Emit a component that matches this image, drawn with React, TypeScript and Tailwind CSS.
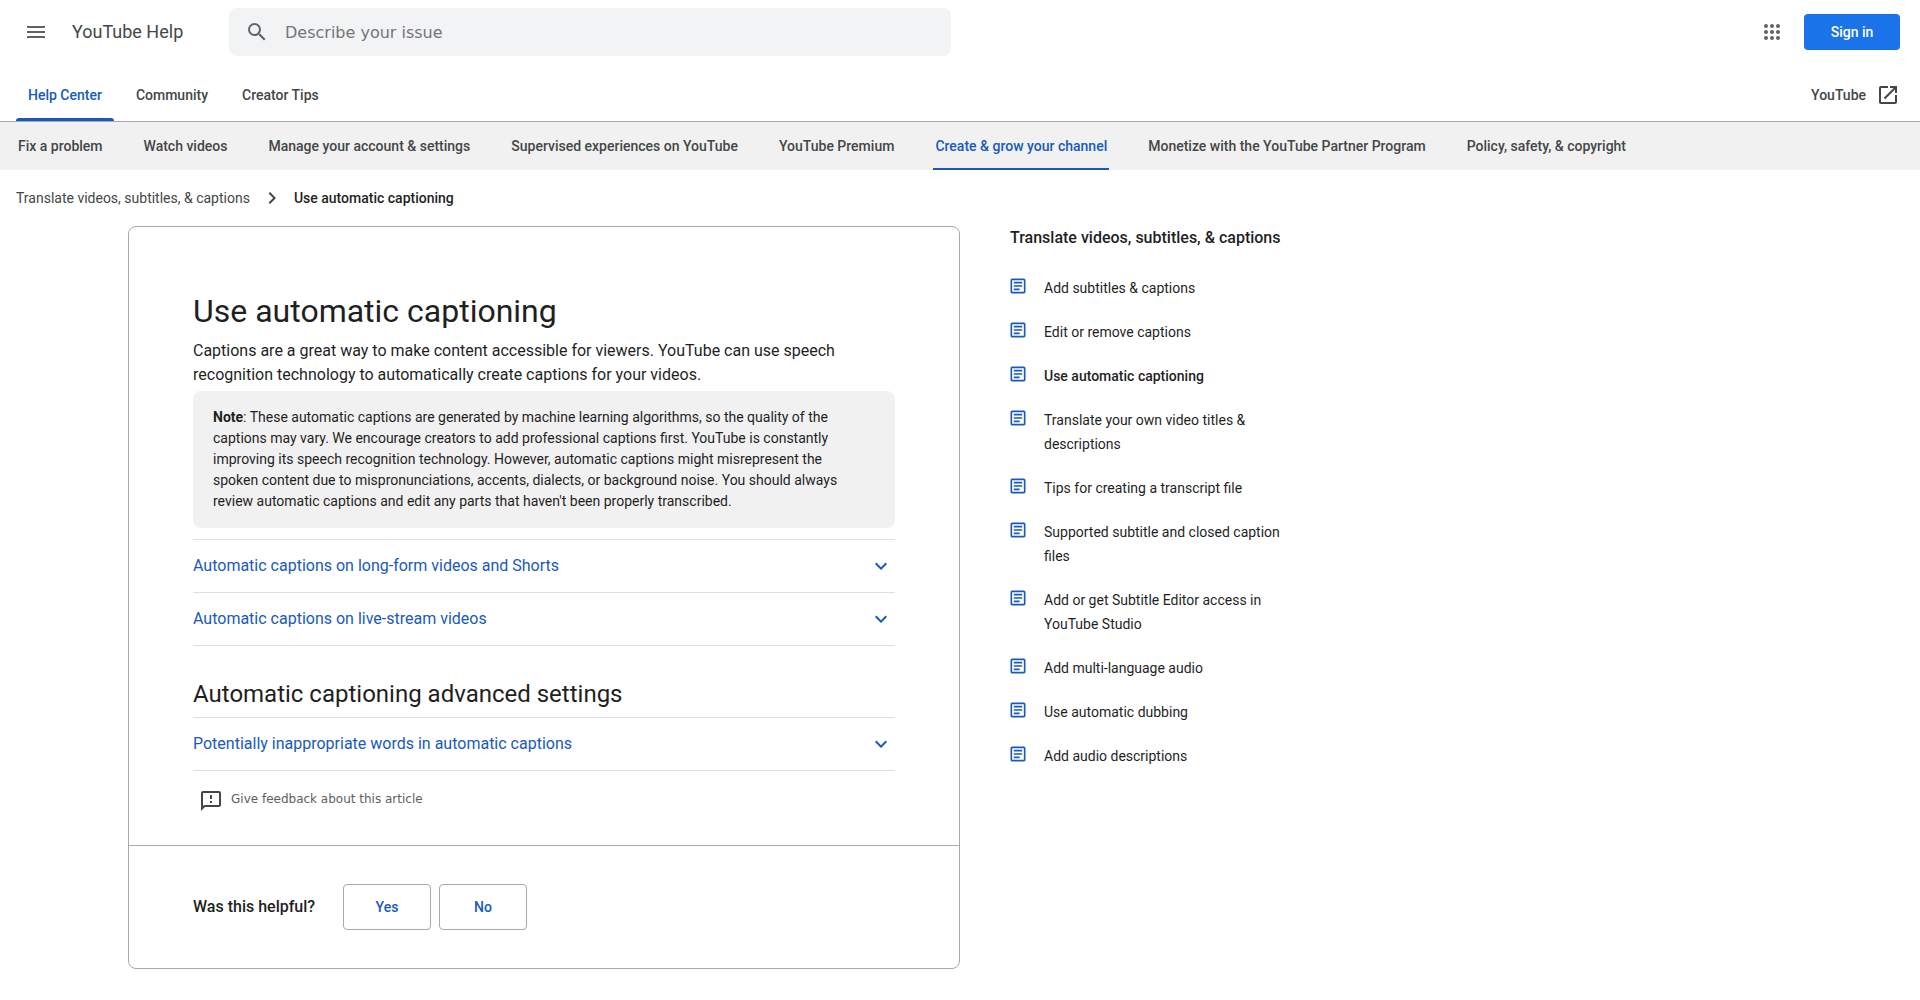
const NAV = [
  "Fix a problem",
  "Watch videos",
  "Manage your account & settings",
  "Supervised experiences on YouTube",
  "YouTube Premium",
  "Create & grow your channel",
  "Monetize with the YouTube Partner Program",
  "Policy, safety, & copyright",
];
const ACTIVE_NAV = "Create & grow your channel";

const ARTICLES = [
  "Add subtitles & captions",
  "Edit or remove captions",
  "Use automatic captioning",
  "Translate your own video titles & descriptions",
  "Tips for creating a transcript file",
  "Supported subtitle and closed caption files",
  "Add or get Subtitle Editor access in YouTube Studio",
  "Add multi-language audio",
  "Use automatic dubbing",
  "Add audio descriptions",
];
const CURRENT_ARTICLE = "Use automatic captioning";

function Icon({ d, className }: { d: string; className: string }) {
  return (
    <svg viewBox="0 0 24 24" fill="currentColor" aria-hidden="true" className={className}>
      <path d={d} />
    </svg>
  );
}

const MENU = "M3 18h18v-2H3v2zm0-5h18v-2H3v2zm0-7v2h18V6H3z";
const SEARCH =
  "M15.5 14h-.79l-.28-.27A6.471 6.471 0 0 0 16 9.5 6.5 6.5 0 1 0 9.5 16c1.61 0 3.09-.59 4.23-1.57l.27.28v.79l5 4.99L20.49 19l-4.99-5zm-6 0C7.01 14 5 11.99 5 9.5S7.01 5 9.5 5 14 7.01 14 9.5 11.99 14 9.5 14z";
const APPS =
  "M6 8c1.1 0 2-.9 2-2s-.9-2-2-2-2 .9-2 2 .9 2 2 2zm6 12c1.1 0 2-.9 2-2s-.9-2-2-2-2 .9-2 2 .9 2 2 2zm-6 0c1.1 0 2-.9 2-2s-.9-2-2-2-2 .9-2 2 .9 2 2 2zm0-6c1.1 0 2-.9 2-2s-.9-2-2-2-2 .9-2 2 .9 2 2 2zm6 0c1.1 0 2-.9 2-2s-.9-2-2-2-2 .9-2 2 .9 2 2 2zm4-8c0 1.1.9 2 2 2s2-.9 2-2-.9-2-2-2-2 .9-2 2zm-4 2c1.1 0 2-.9 2-2s-.9-2-2-2-2 .9-2 2 .9 2 2 2zm6 6c1.1 0 2-.9 2-2s-.9-2-2-2-2 .9-2 2 .9 2 2 2zm0 6c1.1 0 2-.9 2-2s-.9-2-2-2-2 .9-2 2 .9 2 2 2z";
const OPEN_NEW =
  "M19 19H5V5h7V3H5c-1.11 0-2 .9-2 2v14c0 1.1.89 2 2 2h14c1.1 0 2-.9 2-2v-7h-2v7zM14 3v2h3.59l-9.83 9.83 1.41 1.41L19 6.41V10h2V3h-7z";
const CHEVRON_RIGHT = "M10 6 8.59 7.41 13.17 12l-4.58 4.59L10 18l6-6z";
const CHEVRON_DOWN = "M7.41 8.59 12 13.17l4.59-4.58L18 10l-6 6-6-6z";
const FEEDBACK =
  "M20 2H4c-1.1 0-1.99.9-1.99 2L2 22l4-4h14c1.1 0 2-.9 2-2V4c0-1.1-.9-2-2-2zm0 14H5.17l-.59.59-.58.58V4h16v12zm-9-4h2v2h-2zm0-6h2v4h-2z";
const ARTICLE =
  "M19 5v14H5V5h14m0-2H5c-1.1 0-2 .9-2 2v14c0 1.1.9 2 2 2h14c1.1 0 2-.9 2-2V5c0-1.1-.9-2-2-2zm-5 14H7v-2h7v2zm3-4H7v-2h10v2zm0-4H7V7h10v2z";

function Expander({ title }: { title: string }) {
  return (
    <button
      type="button"
      aria-expanded="false"
      className="flex h-[53px] w-full items-center justify-between border-t border-[#e0e0e0] pr-0.5 text-left text-[#185abc]"
    >
      <span>{title}</span>
      <Icon d={CHEVRON_DOWN} className="size-6" />
    </button>
  );
}

export default function App() {
  return (
    <div className="bg-white font-['Roboto',sans-serif] text-base text-[#1f1f1f]">
      <header className="border-b border-[#a9a9a9]">
        <div className="flex h-16 items-center px-5">
          <button type="button" aria-label="Main menu" className="mx-1 text-[#5f6368]">
            <Icon d={MENU} className="size-6" />
          </button>
          <a href="#" className="ml-5 w-[157px] text-lg text-[#444746]">
            YouTube Help
          </a>
          <form role="search" className="flex h-12 w-2/5 max-w-[722px] items-center rounded-lg bg-[#f1f3f4] pl-4">
            <button type="button" aria-label="Search" className="text-[#5f6368]">
              <Icon d={SEARCH} className="size-6" />
            </button>
            <input
              type="text"
              aria-label="Describe your issue"
              placeholder="Describe your issue"
              className="ml-4 h-full min-w-0 flex-1 bg-transparent font-['DejaVu_Sans',sans-serif] text-base outline-none placeholder:text-[#757575]"
            />
          </form>
          <button type="button" aria-label="Google apps" className="mr-5 ml-auto text-[#5f6368]">
            <Icon d={APPS} className="size-6" />
          </button>
          <button type="button" className="h-9 w-24 rounded bg-[#1a73e8] text-sm font-medium text-white">
            Sign in
          </button>
        </div>
        <div className="flex h-[57px] items-stretch justify-between pr-5 pl-4 text-sm font-medium text-[#444746]">
          <nav aria-label="Help sections" className="flex gap-2.5">
            <a href="#" className="flex flex-col text-[#185abc]">
              <span className="flex flex-1 items-center px-3 pt-2">Help Center</span>
              <span className="h-[3px] rounded-t-[3px] bg-[#185abc]" />
            </a>
            <a href="#" className="flex items-center px-3 pt-1">
              Community
            </a>
            <a href="#" className="flex items-center px-3 pt-1">
              Creator Tips
            </a>
          </nav>
          <a href="#" className="flex items-center gap-2.5 pt-1">
            YouTube
            <Icon d={OPEN_NEW} className="size-6" />
          </a>
        </div>
      </header>

      <nav
        aria-label="Topics"
        className="flex h-12 gap-[37px] bg-[#f1f1f1] px-4 text-sm font-medium whitespace-nowrap text-[#444746]"
      >
        {NAV.map((item) =>
          item === ACTIVE_NAV ? (
            <a
              key={item}
              href="#"
              className="flex items-center border-y-2 border-t-transparent border-b-[#185abc] px-0.5 text-[#185abc]"
            >
              {item}
            </a>
          ) : (
            <a key={item} href="#" className="flex items-center px-0.5">
              {item}
            </a>
          ),
        )}
      </nav>

      <nav aria-label="Breadcrumb" className="flex h-14 items-center gap-2.5 px-4 text-sm">
        <a href="#" className="text-[#444746]">
          Translate videos, subtitles, &amp; captions
        </a>
        <Icon d={CHEVRON_RIGHT} className="size-6 text-[#444746]" />
        <span className="font-medium">Use automatic captioning</span>
      </nav>

      <div className="flex items-start gap-12 pl-32">
        <main className="w-full max-w-[832px] rounded-lg border border-[#a9a9a9]">
          <article className="px-16 pt-16 pb-8">
            <h1 className="text-[32px] leading-10">Use automatic captioning</h1>
            <p className="mt-2 leading-6">
              Captions are a great way to make content accessible for viewers. YouTube can use speech recognition
              technology to automatically create captions for your videos.
            </p>
            <p className="mt-1 rounded-lg bg-[#f1f1f1] py-4 pr-10 pl-5 text-sm leading-[21px]">
              <b>Note</b>: These automatic captions are generated by machine learning algorithms, so the quality of the
              captions may vary. We encourage creators to add professional captions first. YouTube is constantly
              improving its speech recognition technology. However, automatic captions might misrepresent the spoken
              content due to mispronunciations, accents, dialects, or background noise. You should always review
              automatic captions and edit any parts that haven't been properly transcribed.
            </p>
            <div className="mt-[11px] border-b border-[#e0e0e0]">
              <Expander title="Automatic captions on long-form videos and Shorts" />
              <Expander title="Automatic captions on live-stream videos" />
            </div>
            <h2 className="mt-8 text-2xl leading-8">Automatic captioning advanced settings</h2>
            <div className="mt-[7px] border-b border-[#e0e0e0]">
              <Expander title="Potentially inappropriate words in automatic captions" />
            </div>
            <button
              type="button"
              className="mt-4 ml-1.5 flex items-start gap-2 font-['DejaVu_Sans',sans-serif] text-xs leading-6 text-[#5e5e5e]"
            >
              <Icon d={FEEDBACK} className="mt-0.5 size-6 text-[#444746]" />
              Give feedback about this article
            </button>
          </article>
          <section className="flex items-center border-t border-[#a9a9a9] px-16 py-[38px]">
            <h2 className="w-[150px] font-medium">Was this helpful?</h2>
            <div className="flex gap-2 text-sm font-medium text-[#185abc]">
              <button type="button" className="h-[46px] w-[88px] rounded border border-[#a9a9a9]">
                Yes
              </button>
              <button type="button" className="h-[46px] w-[88px] rounded border border-[#a9a9a9]">
                No
              </button>
            </div>
          </section>
        </main>

        <aside className="w-[284px] shrink-0">
          <h2 className="pl-0.5 leading-6 font-medium">Translate videos, subtitles, &amp; captions</h2>
          <ul className="mt-4 text-sm leading-6">
            {ARTICLES.map((title) => (
              <li key={title}>
                <a href="#" className="flex gap-4 py-2.5">
                  <Icon d={ARTICLE} className="size-5 shrink-0 text-[#185abc]" />
                  <span className={title === CURRENT_ARTICLE ? "font-medium" : ""}>{title}</span>
                </a>
              </li>
            ))}
          </ul>
        </aside>
      </div>
    </div>
  );
}
